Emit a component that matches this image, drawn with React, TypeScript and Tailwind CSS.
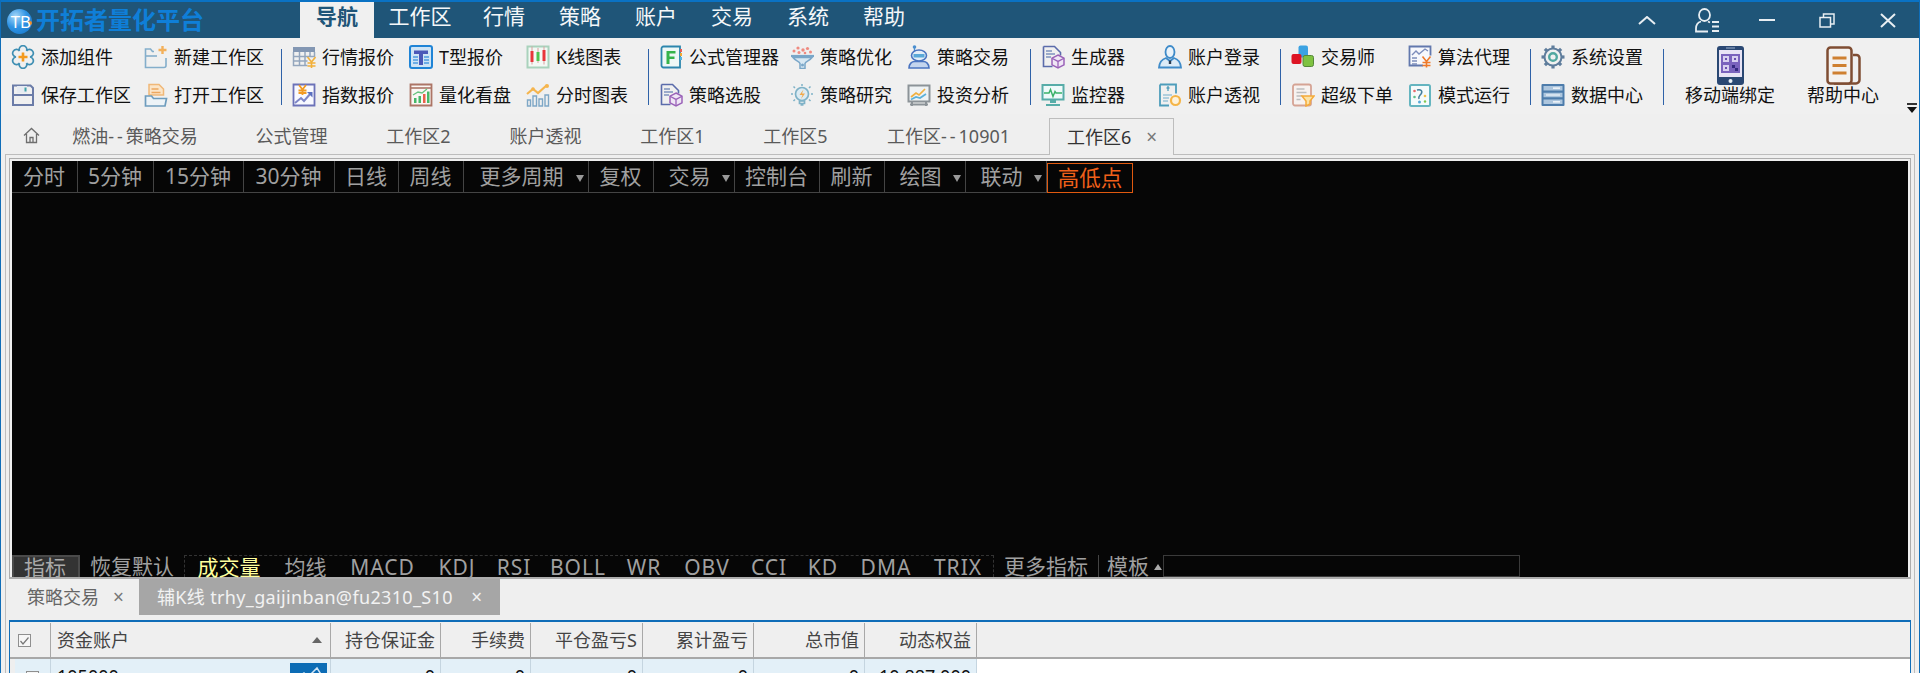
import type { ReactNode } from 'react';

const Svg = ({ children, w = 24, h = 24 }: { children: ReactNode; w?: number; h?: number }) => (
  <svg width={w} height={h} viewBox={`0 0 ${w} ${h}`} fill="none" className="shrink-0">
    {children}
  </svg>
);

const yen = (x: number, y: number, c = '#f0962a') => (
  <path d={`M${x - 4} ${y - 5}l4 5 4-5M${x} ${y}v6M${x - 4} ${y + 1}h8M${x - 4} ${y + 4}h8`} stroke={c} strokeWidth="1.6" />
);

const cubeDoc = (
  <Svg>
    <path d="M2.5 1.5h11l6 6v3M2.5 1.5v20h9" stroke="#5b6cab" strokeWidth="1.6" />
    <path d="M5 6h6M5 9h9M5 12h5" stroke="#7d93bd" strokeWidth="1.4" />
    <path d="M17 10l6 3.2v6.6L17 23l-6-3.200v-6.600z" fill="#efe6f5" stroke="#9a62b8" strokeWidth="1.5" />
    <path d="M11 13.200l6 3.200 6-3.200M17 16.400V23" stroke="#9a62b8" strokeWidth="1.300" />
  </Svg>
);

const icons: Record<string, ReactNode> = {
  add: (
    <Svg>
      <path
        d="M8.500 5.940A3.800 3.800 0 1 1 15.500 5.940A3.800 3.800 0 1 1 19 12A3.800 3.800 0 1 1 15.500 18.060A3.800 3.800 0 1 1 8.500 18.060A3.800 3.800 0 1 1 5 12A3.800 3.800 0 1 1 8.500 5.940Z"
        stroke="#3f8fb3"
        strokeWidth="1.700"
      />
      <path d="M12 7.500v9M7.500 12h9" stroke="#f39a1f" strokeWidth="2.600" />
    </Svg>
  ),
  save: (
    <Svg>
      <path d="M2 2.500h17.500l2.500 2.500v17H2z" stroke="#6b7ca8" strokeWidth="2" />
      <path d="M3 12h18" stroke="#6b7ca8" strokeWidth="2" />
      <path d="M6 3h10v7H6z" fill="#e6ebf2" />
      <path d="M14.500 4.500v4" stroke="#43a3a8" strokeWidth="2" />
    </Svg>
  ),
  newWs: (
    <Svg>
      <path d="M10 6.500H8.500L6.500 4H1.500v18.500h18.500a2 2 0 0 0 2-2V13" stroke="#84aecb" strokeWidth="1.600" />
      <path d="M2 11h11" stroke="#84aecb" strokeWidth="1.600" />
      <path d="M18.500 1v8M14.500 5h8" stroke="#f3b05a" strokeWidth="2.400" />
    </Svg>
  ),
  open: (
    <Svg>
      <path d="M5 1.500h10l4.500 4.500v6H5z" fill="#fbe5c8" stroke="#f0b878" strokeWidth="1.500" />
      <path d="M7.500 6h7M7.500 9.500h9" stroke="#eda860" strokeWidth="1.500" />
      <path d="M1.500 13h6l2 2.500h13l-1.500 7.500h-19.500z" fill="#edf3f7" stroke="#6d9cbd" strokeWidth="1.700" />
    </Svg>
  ),
  quote: (
    <Svg>
      <path d="M1 2h22v5H1z" fill="#8397b3" />
      <path d="M1.500 7v13.500h14M22.500 7v5M1.500 11.500h21M1.500 16h14M7.500 7v13M13 7v13M18 7v5" stroke="#94a6bd" strokeWidth="1.500" />
      {yen(19.5, 17, '#f2b03a')}
    </Svg>
  ),
  t: (
    <Svg>
      <rect x="1" y="1" width="22" height="22" rx="2" fill="#cfe4f5" stroke="#1f84d6" strokeWidth="2" />
      <path d="M5 5.500h14v3.500H14v11h-4V9H5z" fill="#4a58b8" />
      <path d="M4 12h5M4 15h5M4 18h5M15 12h5M15 15h5M15 18h5" stroke="#4d9ae0" strokeWidth="1.300" />
    </Svg>
  ),
  k: (
    <Svg>
      <path d="M1.500 1.500h21v21h-21z" fill="#f3f8f4" stroke="#a9d2bc" strokeWidth="2" />
      <path d="M6 1.500v18M12 3v15M18 1.500v18" stroke="#d9a0a0" strokeWidth="1" />
      <path d="M4.500 6h3v11h-3zM16.500 5h3v11h-3z" fill="#e8363a" />
      <path d="M10.500 7h3v9h-3z" fill="#4fc34f" />
    </Svg>
  ),
  index: (
    <Svg>
      <path d="M1.500 1.500h21v21h-21z" fill="#f8f9ff" stroke="#6c72b8" strokeWidth="1.800" />
      <path d="M7 2l3.500 4.500L14 2M10.500 6.500V12M6.500 7.500h8M6.500 10h8" stroke="#f29b22" strokeWidth="1.800" />
      <path d="M3 20l6-5 3 3 7-8" stroke="#7e86c6" strokeWidth="2" />
      <path d="M15 9h5.500v5.500z" fill="#5a6fc0" />
    </Svg>
  ),
  quant: (
    <Svg>
      <path d="M1.500 1.500h21v21h-21z" fill="#fbf7f4" stroke="#ac7566" strokeWidth="1.800" />
      <path d="M1.500 5h21" stroke="#ac7566" strokeWidth="1.600" />
      <path d="M5 15h2.500v5H5zM9.500 13H12v7H9.500z" fill="#46b868" />
      <path d="M14 11h2.500v9H14z" fill="#e8614a" />
      <path d="M18 8.500h2.500V20H18z" fill="#46b868" />
      <path d="M4 12l5-3 4 1 5-4" stroke="#67c47e" strokeWidth="1.300" />
    </Svg>
  ),
  time: (
    <Svg>
      <path d="M1 11l6-5 5 4 9-8" stroke="#f5b54e" strokeWidth="2.200" />
      <circle cx="7" cy="6" r="1.800" fill="#f5b54e" />
      <circle cx="21" cy="3" r="2" fill="#f5b54e" />
      <path d="M1.500 17h3v6h-3zM7 13h3.500v10H7zM13 16h3.500v7H13zM19 12h3.500v11H19z" stroke="#7ea7c6" strokeWidth="1.400" />
    </Svg>
  ),
  formula: (
    <Svg>
      <path d="M2.500 3.500a2 2 0 0 1 2-2H21v21H4.500a2 2 0 0 1-2-2z" fill="#eef8f6" stroke="#2c86ad" strokeWidth="1.800" />
      <path d="M7.500 6h9v2.500H10.500v3h5V14h-5v5h-3z" fill="#36b44a" />
      <path d="M22 4v3" stroke="#e85e56" strokeWidth="2" />
      <path d="M22 8v3" stroke="#f2a830" strokeWidth="2" />
      <path d="M22 12v3" stroke="#54b4e0" strokeWidth="2" />
    </Svg>
  ),
  optimize: (
    <Svg>
      <path d="M1 11h23" stroke="#7aa6c8" strokeWidth="2.200" />
      <path d="M3 12.500c3 4 6 3.500 7 6v5h5v-5c1-2.500 4-2 7-6z" fill="#d8e8f3" stroke="#7aa6c8" strokeWidth="1.500" />
      <circle cx="12.500" cy="20" r="1.500" fill="#7aa6c8" />
      <g fill="#ef8a80">
        <circle cx="4" cy="6" r="1.500" /><circle cx="8" cy="3" r="1.600" /><circle cx="9" cy="7.500" r="1.500" /><circle cx="13" cy="5" r="1.700" />
        <circle cx="15" cy="8" r="1.300" /><circle cx="17.500" cy="3.500" r="1.600" /><circle cx="20.500" cy="7" r="1.500" />
      </g>
    </Svg>
  ),
  robot: (
    <Svg>
      <circle cx="7.500" cy="2" r="1.800" fill="#4b8fd0" />
      <path d="M7.500 3v3" stroke="#4b8fd0" strokeWidth="1.300" />
      <ellipse cx="12" cy="10.500" rx="7.500" ry="5.500" fill="#e4eef8" stroke="#4a74c0" strokeWidth="1.600" />
      <path d="M6.500 9h11v3.500h-11z" fill="#5aa8d8" />
      <path d="M2 23c0-4.500 3-6.500 5.500-6.500h9c2.500 0 5.500 2 5.500 6.500z" fill="#c4d5ee" stroke="#4a74c0" strokeWidth="1.600" />
    </Svg>
  ),
  select: cubeDoc,
  research: (
    <Svg>
      <circle cx="12" cy="11" r="6.500" fill="#dcebf3" stroke="#7fb2c7" strokeWidth="1.700" />
      <path d="M9.500 18h5v2.500h-5zM10.500 22h3" stroke="#7fb2c7" strokeWidth="1.700" />
      <path d="M13.500 6.500L9.500 12h3l-1.500 4 4-5.500h-3z" fill="#f2a94a" />
      <path d="M12 1v2M3.500 3.500l1.500 1.500M20.500 3.500L19 5M1 11h2M21 11h2M3.500 18L5 16.500M20.500 18L19 16.500" stroke="#7fb2c7" strokeWidth="1.500" />
    </Svg>
  ),
  invest: (
    <Svg>
      <path d="M1.500 2.500h21v16h-21z" fill="#eef2f4" stroke="#8c9398" strokeWidth="2" />
      <path d="M4 14l5-4 3 2 6-6" stroke="#f0b040" strokeWidth="1.700" />
      <path d="M4 16.500l5-2.500 4 1 6-4" stroke="#5bb0d8" strokeWidth="1.700" />
      <path d="M5 19v4M19 19v4M3 21.500h18" stroke="#8c9398" strokeWidth="2" />
    </Svg>
  ),
  gen: cubeDoc,
  monitor: (
    <Svg>
      <path d="M1.500 2h21v14.500h-21z" fill="#effafa" stroke="#57aca8" strokeWidth="2" />
      <path d="M3 10h5l1.500-3.500 2.500 7 2-5 1 1.500h6" stroke="#3bb26a" strokeWidth="1.500" />
      <path d="M9 17h6v3H9zM5 21h14v2H5z" fill="#57aca8" />
    </Svg>
  ),
  login: (
    <Svg>
      <ellipse cx="12" cy="7" rx="4.500" ry="6" fill="#eaf3fa" stroke="#3f8bc9" strokeWidth="1.800" />
      <path d="M8 13c-3.500 1-6.500 4-7 9.500h22c-.5-5.500-3.500-8.500-7-9.500l-4 3z" fill="#dcebf7" stroke="#3f8bc9" strokeWidth="1.800" />
      <path d="M12 15.500v3.500" stroke="#2a3c52" strokeWidth="2.400" />
    </Svg>
  ),
  view: (
    <Svg>
      <path d="M2 1.500h16v9M2 1.500v21h9" stroke="#4e9dbb" strokeWidth="1.800" />
      <path d="M5 12h9M5 15h6M5 18h5" stroke="#9ac3d8" strokeWidth="1.300" />
      <path d="M10 3v5M8.500 5h3" stroke="#4e9dbb" strokeWidth="1.300" />
      <circle cx="17.500" cy="17.500" r="4.500" fill="#fdf2dc" stroke="#f5b548" strokeWidth="2.200" />
    </Svg>
  ),
  trader: (
    <Svg>
      <rect x="7.500" y="0.500" width="9.500" height="12" rx="2" fill="#3ba2e2" />
      <rect x="0.500" y="9" width="10" height="10" rx="2" fill="#dd1424" />
      <rect x="12" y="10.500" width="10.500" height="11" rx="2" fill="#7fc241" stroke="#55883a" strokeWidth="1" />
    </Svg>
  ),
  super: (
    <Svg>
      <rect x="2" y="1.500" width="18" height="21" rx="2" fill="#f7f2f0" stroke="#d5a394" strokeWidth="1.800" />
      <path d="M5.500 6h8M5.500 9.500h10M5.500 13h6M5.500 16.500h4" stroke="#bdbdbd" strokeWidth="1.400" />
      <path d="M11 13h12l-4 5v3l-4 2v-5z" fill="#fbe3a8" stroke="#f5ab3a" strokeWidth="1.500" />
    </Svg>
  ),
  algo: (
    <Svg>
      <path d="M15 20.500H1.500v-19h21v9" stroke="#6278ad" strokeWidth="1.800" fill="#f7f8fc" />
      <path d="M4 10l4-4 3 3 6-5 3 2" stroke="#7d8dbb" strokeWidth="1.400" />
      <path d="M4 13h5M4 16h5M4 19h5" stroke="#7d8dbb" strokeWidth="1.300" />
      {yen(18.5, 16.5, '#ef7a2a')}
    </Svg>
  ),
  mode: (
    <Svg>
      <rect x="2" y="2" width="20" height="21" rx="1.500" fill="#f5fbfb" stroke="#65b5c0" strokeWidth="2" />
      <path d="M9 7c4-1 6 1 4 4-1.500 2-3 2.500-2 5" stroke="#46809c" strokeWidth="1.500" />
      <circle cx="6.500" cy="8" r="1.300" fill="#e86a6a" /><circle cx="17" cy="13" r="1.300" fill="#f2c14a" />
      <circle cx="6.500" cy="14" r="1.300" fill="#5fc08a" /><circle cx="11.500" cy="19" r="1.500" fill="#56a8d8" />
      <circle cx="17" cy="18.500" r="1.200" fill="#7ec850" />
    </Svg>
  ),
  settings: (
    <Svg>
      <g transform="translate(12 12)" stroke="#5f7d9c" strokeWidth="3.200">
        {[0, 45, 90, 135, 180, 225, 270, 315].map(a => (
          <path key={a} d="M0-11.500v3" transform={`rotate(${a})`} />
        ))}
      </g>
      <circle cx="12" cy="12" r="8.500" stroke="#5f7d9c" strokeWidth="2" fill="#f0f0f0" />
      <circle cx="12" cy="12" r="3.800" stroke="#52a8a0" strokeWidth="2.400" />
    </Svg>
  ),
  data: (
    <Svg>
      <rect x="0.500" y="1" width="23" height="22" rx="1" fill="#4d7cab" />
      <path d="M2.500 3h19v4.500h-19zM2.500 9.800h19v4.500h-19zM2.500 16.500h19V21h-19z" fill="#adc6de" />
      <path d="M12 5.200h7M5 12h14M12 18.800h7" stroke="#fff" strokeWidth="1.200" />
    </Svg>
  ),
};

const ribbonIconPhone = (
  <Svg w={27} h={39}>
    <rect x="0" y="0" width="27" height="39" rx="3" fill="#2a4873" />
    <rect x="2" y="4" width="23" height="27" fill="#e8e4f5" />
    <path d="M9 2h9" stroke="#8aa0c0" strokeWidth="1.200" />
    <rect x="4" y="8" width="19" height="19" fill="#7a63bd" />
    <path d="M6 10h6v6H6zM15 10h6v6h-6zM6 19h6v6H6z" fill="#d8d0f0" />
    <path d="M8 12h2v2H8zM17 12h2v2h-2zM8 21h2v2H8z" fill="#6a50b0" />
    <path d="M15 19h3v3h-3zM18 22h3v3h-3z" fill="#352a80" />
    <circle cx="13.500" cy="35" r="2" fill="#e8eef5" />
  </Svg>
);

const ribbonIconHelp = (
  <Svg w={35} h={39}>
    <path d="M27 9h3.500a3 3 0 0 1 3 3v22a3.500 3.500 0 0 1-3.500 3.500H8" stroke="#7f4d33" strokeWidth="2.500" />
    <path d="M4.500 1.500h18a3 3 0 0 1 3 3V34.500a3 3 0 0 1-3 3h-18a3 3 0 0 1-3-3V4.500a3 3 0 0 1 3-3z" fill="#f4f2f0" stroke="#7f4d33" strokeWidth="2.500" />
    <path d="M6.500 12h14M6.500 19.500h14M6.500 27h14" stroke="#cf8030" strokeWidth="3" />
  </Svg>
);

type Col = { w: number; items: [string, string][] };
type Group = { cols: Col[] };

const groups: Group[] = [
  { cols: [
    { w: 133, items: [['添加组件', 'add'], ['保存工作区', 'save']] },
    { w: 137, items: [['新建工作区', 'newWs'], ['打开工作区', 'open']] },
  ] },
  { cols: [
    { w: 117, items: [['行情报价', 'quote'], ['指数报价', 'index']] },
    { w: 117, items: [['T型报价', 't'], ['量化看盘', 'quant']] },
    { w: 122, items: [['K线图表', 'k'], ['分时图表', 'time']] },
  ] },
  { cols: [
    { w: 131, items: [['公式管理器', 'formula'], ['策略选股', 'select']] },
    { w: 117, items: [['策略优化', 'optimize'], ['策略研究', 'research']] },
    { w: 123, items: [['策略交易', 'robot'], ['投资分析', 'invest']] },
  ] },
  { cols: [
    { w: 117, items: [['生成器', 'gen'], ['监控器', 'monitor']] },
    { w: 122, items: [['账户登录', 'login'], ['账户透视', 'view']] },
  ] },
  { cols: [
    { w: 117, items: [['交易师', 'trader'], ['超级下单', 'super']] },
    { w: 122, items: [['算法代理', 'algo'], ['模式运行', 'mode']] },
  ] },
  { cols: [{ w: 122, items: [['系统设置', 'settings'], ['数据中心', 'data']] }] },
];

const menus: [string, number][] = [
  ['工作区', 92],
  ['行情', 76],
  ['策略', 76],
  ['账户', 76],
  ['交易', 76],
  ['系统', 76],
  ['帮助', 76],
];

const dashes = <span className="tracking-[3px]">--</span>;

const tabs: [ReactNode, number][] = [
  [<>燃油{dashes}策略交易</>, 182],
  ['公式管理', 131],
  ['工作区2', 123],
  ['账户透视', 131],
  ['工作区1', 123],
  ['工作区5', 123],
  [<>工作区{dashes}10901</>, 183],
];

const topBar: { label: string; w: number; arrow?: boolean }[] = [
  { label: '分时', w: 66 },
  { label: '5分钟', w: 76 },
  { label: '15分钟', w: 90 },
  { label: '30分钟', w: 91 },
  { label: '日线', w: 64 },
  { label: '周线', w: 65 },
  { label: '更多周期', w: 125, arrow: true },
  { label: '复权', w: 65 },
  { label: '交易', w: 81, arrow: true },
  { label: '控制台', w: 85 },
  { label: '刷新', w: 65 },
  { label: '绘图', w: 81, arrow: true },
  { label: '联动', w: 81, arrow: true },
];

const indicators: [string, number][] = [
  ['成交量', 88],
  ['均线', 65],
  ['MACD', 89],
  ['KDJ', 60],
  ['RSI', 54],
  ['BOLL', 74],
  ['WR', 58],
  ['OBV', 68],
  ['CCI', 56],
  ['KD', 52],
  ['DMA', 74],
  ['TRIX', 70],
];

const columns: [string, number][] = [
  ['持仓保证金', 110],
  ['手续费', 90],
  ['平仓盈亏S', 112],
  ['累计盈亏', 111],
  ['总市值', 111],
  ['动态权益', 112],
];

const rowValues = ['0', '0', '0', '0', '0', '10,887,000'];

function RibbonItem({ label, icon }: { label: string; icon: string }) {
  return (
    <div className="flex h-[38px] items-center gap-[6px] whitespace-nowrap text-[18px] text-[#111]">
      {icons[icon]}
      <span>{label}</span>
    </div>
  );
}

function Ribbon() {
  return (
    <div className="flex h-[76px] shrink-0 bg-[#f0f0f0] pl-[10px]">
      {groups.map((group, i) => (
        <div key={i} className="flex">
          {i > 0 && <div className="mr-[10px] mt-[11px] h-[56px] w-px bg-[#2f62a8]" />}
          {group.cols.map(col => (
            <div key={col.items[0][0]} className="shrink-0" style={{ width: col.w }}>
              {col.items.map(([label, icon]) => (
                <RibbonItem key={label} label={label} icon={icon} />
              ))}
            </div>
          ))}
        </div>
      ))}
      <div className="mt-[11px] h-[56px] w-px bg-[#2f62a8]" />
      <div className="ml-[21px] flex w-[90px] flex-col items-center pt-[8px] text-[18px] text-[#111]">
        {ribbonIconPhone}
        <span className="h-[20px] whitespace-nowrap leading-[20px]">移动端绑定</span>
      </div>
      <div className="ml-[32px] flex w-[72px] flex-col items-center pt-[8px] text-[18px] text-[#111]">
        {ribbonIconHelp}
        <span className="h-[20px] whitespace-nowrap leading-[20px]">帮助中心</span>
      </div>
      <div className="ml-auto mb-[1px] mr-[2px] flex flex-col items-center self-end">
        <div className="h-[2px] w-[10px] bg-[#333]" />
        <div className="mt-[2px] h-0 w-0 border-x-[5px] border-t-[6px] border-x-transparent border-t-[#111]" />
      </div>
    </div>
  );
}

function TitleBar() {
  return (
    <div className="flex h-[38px] shrink-0 border-t-2 border-[#0a72c4] bg-[#1f5578]">
      <div className="flex w-[299px] shrink-0 items-center pl-[6px]">
        <svg width="25" height="25" viewBox="0 0 25 25" className="mt-[2px] shrink-0">
          <defs>
            <radialGradient id="logo" cx="35%" cy="30%" r="80%">
              <stop offset="0%" stopColor="#a8d8f8" />
              <stop offset="55%" stopColor="#2f93e4" />
              <stop offset="100%" stopColor="#1a7dd0" />
            </radialGradient>
          </defs>
          <circle cx="12.500" cy="12.500" r="12.500" fill="url(#logo)" />
          <circle cx="23" cy="14" r="2" fill="#f08a2a" />
          <text x="3.500" y="18.500" fontSize="16" fill="#fff" fontFamily="Liberation Sans, sans-serif">TB</text>
        </svg>
        <span className="ml-[4px] whitespace-nowrap text-[24px] font-bold leading-none text-[#0f7fd8]">开拓者量化平台</span>
      </div>
      <div className="flex h-full items-end">
        <div className="flex h-[36px] w-[74px] items-center justify-center bg-[#f0f0f0] pb-[7px] text-[21px] font-bold text-[#1f5578]">导航</div>
        {menus.map(([menu, w]) => (
          <div key={menu} className="flex h-[36px] items-center justify-center pb-[7px] text-[21px] text-[#f4f7f9]" style={{ width: w }}>{menu}</div>
        ))}
      </div>
      <div className="ml-auto flex items-center text-[#e8eef2]">
        <div className="flex w-[60px] justify-center">
          <svg width="18" height="9" viewBox="0 0 18 9" fill="none" stroke="currentColor" strokeWidth="2"><path d="M1 8l8-7 8 7" /></svg>
        </div>
        <div className="flex w-[60px] justify-center">
          <svg width="25" height="25" viewBox="0 0 25 25" fill="none" stroke="currentColor" strokeWidth="1.800">
            <ellipse cx="9.500" cy="7" rx="5.500" ry="6" />
            <path d="M6 13.500c-3.500 1-5 3.500-5 7v3h12M13 13.500l2 1" />
            <path d="M17 14h7M17 18.500h7M17 23h7" />
          </svg>
        </div>
        <div className="flex w-[60px] justify-center">
          <div className="h-[2px] w-[16px] bg-current" />
        </div>
        <div className="flex w-[60px] justify-center">
          <svg width="16" height="15" viewBox="0 0 16 15" fill="none" stroke="currentColor" strokeWidth="1.500"><path d="M1 4.500h10.500V14H1zM4.500 4V1H15v10h-3" /></svg>
        </div>
        <div className="flex w-[62px] justify-center">
          <svg width="16" height="15" viewBox="0 0 16 15" fill="none" stroke="currentColor" strokeWidth="2"><path d="M1 1l14 13M15 1L1 14" /></svg>
        </div>
      </div>
    </div>
  );
}

function TabRow() {
  return (
    <div className="flex h-[40px] shrink-0 items-end bg-[#efefef] pl-[22px] text-[18px] text-[#5a5a5a]">
      <svg width="17" height="17" viewBox="0 0 17 17" fill="none" stroke="#6f6f6f" strokeWidth="1.300" className="mb-[10px] mr-[4px] shrink-0">
        <path d="M1 8.500L8.500 1.500l7.500 7M3.500 7v8.500h10V7M7 15.500v-5h3v5" />
      </svg>
      {tabs.map(([label, w], i) => (
        <div key={i} className="flex h-[36px] shrink-0 items-center justify-center whitespace-nowrap pt-px" style={{ width: w }}>
          {label}
        </div>
      ))}
      <div className="relative z-10 -mb-px ml-[9px] flex h-[37px] w-[125px] shrink-0 items-center border-x border-t border-[#bdbdbd] bg-[#efefef] pl-[17px] text-[#333]">
        <span>工作区6</span>
        <span className="ml-auto mr-[16px] text-[19px] leading-none text-[#777]">×</span>
      </div>
    </div>
  );
}

function TopToolbar() {
  return (
    <div className="flex h-[32px] shrink-0 text-[21px] text-[#a0a0a0]">
      {topBar.map(item => (
        <div
          key={item.label}
          className={`relative flex shrink-0 items-center justify-center whitespace-nowrap border-b border-r border-[#444] ${item.arrow ? 'pr-[9px]' : 'pr-[1px]'}`}
          style={{ width: item.w }}
        >
          {item.label}
          {item.arrow && <span className="absolute right-[4px] top-[14px] h-0 w-0 border-x-[4px] border-t-[7px] border-x-transparent border-t-[#999]" />}
        </div>
      ))}
      <div className="mt-[2px] flex w-[86px] shrink-0 items-center justify-center whitespace-nowrap border border-[#e0590f] text-[21.500px] text-[#f0601a]">高低点</div>
    </div>
  );
}

function BottomToolbar() {
  return (
    <div className="flex h-[22px] shrink-0 text-[21px] leading-[22px] text-[#a0a0a0]">
      <div className="flex w-[68px] shrink-0 justify-center border-x-2 border-t-2 border-[#4a4a4a] bg-[#333] pr-[2px] leading-[20px] text-[#aaa]">指标</div>
      <div className="flex w-[104px] shrink-0 justify-center whitespace-nowrap">恢复默认</div>
      <div className="flex border-x border-t border-dashed border-[#333]">
        {indicators.map(([label, w], i) => (
          <div
            key={label}
            className={`flex shrink-0 justify-center whitespace-nowrap ${i === 0 ? 'text-[#ffff9c]' : i > 1 ? 'tracking-[1px]' : ''}`}
            style={{ width: w }}
          >
            {label}
          </div>
        ))}
      </div>
      <div className="flex w-[104px] shrink-0 justify-center whitespace-nowrap">更多指标</div>
      <div className="flex w-[65px] shrink-0 items-start whitespace-nowrap border-l border-[#444] pl-[8px]">
        模板
        <span className="ml-[5px] mt-[9px] h-0 w-0 border-x-[4px] border-b-[6px] border-x-transparent border-b-[#aaa]" />
      </div>
      <div className="h-[22px] w-[357px] shrink-0 border border-[#3a3a3a]" />
    </div>
  );
}

function Checkbox({ checked }: { checked?: boolean }) {
  return (
    <span className="flex h-[13px] w-[13px] shrink-0 items-center justify-center border border-[#8f8f8f] bg-[#f6f6f6]">
      {checked && (
        <svg width="9" height="8" viewBox="0 0 9 8" fill="none" stroke="#777" strokeWidth="1.200"><path d="M.5 4l2.500 3 5.500-6.500" /></svg>
      )}
    </span>
  );
}

function Table() {
  return (
    <div className="min-h-0 flex-1 border-x border-t-2 border-[#0f6db8] text-[18px]">
      <div className="flex h-[37px] border-b-2 border-[#a8a8a8] bg-[#efefef] text-[#444]">
        <div className="flex w-[40px] items-center pl-[8px] pt-[2px]">
          <Checkbox checked />
        </div>
        <div className="mt-[1px] flex w-[281px] items-center justify-between border-x border-[#a8a8a8] pl-[6px] pr-[8px]">
          <span>资金账户</span>
          <span className="h-0 w-0 border-x-[5px] border-b-[6px] border-x-transparent border-b-[#666]" />
        </div>
        {columns.map(([label, w]) => (
          <div key={label} className="mt-[1px] flex shrink-0 items-center justify-end whitespace-nowrap border-r border-[#a8a8a8] pr-[5px]" style={{ width: w }}>
            {label}
          </div>
        ))}
      </div>
      <div className="flex h-[34px] bg-white text-[#111]">
        <div className="w-[5px] bg-[#efefef]" />
        <div className="flex w-[35px] bg-[#e3f0f8] pl-[11px] pt-[12px]">
          <Checkbox />
        </div>
        <div className="flex w-[281px] justify-between border-x border-[#c5d5e0] bg-[#e3f0f8] pl-[6px] pr-[3px] leading-[34px]">
          <span>105000</span>
          <span className="mt-[4px] flex h-[30px] w-[37px] items-start justify-center bg-[#0c6cb5] pt-[3px]">
            <svg width="30" height="14" viewBox="0 0 30 14" fill="none" stroke="#cfe4f5" strokeWidth="1.500"><path d="M2 12l8-5 4 4 9-9 5 8" /></svg>
          </span>
        </div>
        {columns.map(([label, w], i) => (
          <div key={label} className="flex shrink-0 justify-end border-r border-[#c5d5e0] bg-[#e3f0f8] pr-[5px] leading-[34px]" style={{ width: w }}>
            {rowValues[i]}
          </div>
        ))}
      </div>
    </div>
  );
}

export default function App() {
  return (
    <div className="flex h-[673px] flex-col overflow-hidden border-x border-[#0f6db8] bg-[#efefef] font-['Noto_Sans','Noto_Sans_CJK_SC',sans-serif]">
      <TitleBar />
      <Ribbon />
      <TabRow />
      <div className="mx-[4px] flex min-h-0 flex-1 flex-col border-x border-t border-[#bdbdbd] px-[3px] pt-[3px]">
        <div className="h-[421px] shrink-0 border-x border-b-2 border-t border-[#adadad] px-[2px] pb-[1px] pt-[2px]">
          <div className="flex h-[416px] flex-col justify-between bg-[#060606]">
            <TopToolbar />
            <BottomToolbar />
          </div>
        </div>
        <div className="flex h-[41px] shrink-0 items-start text-[18px]">
          <div className="flex h-[36px] w-[130px] items-center pl-[18px] text-[#666]">
            <span>策略交易</span>
            <span className="ml-[14px] text-[19px] leading-none text-[#777]">×</span>
          </div>
          <div className="flex h-[36px] w-[361px] items-center whitespace-nowrap bg-[#a6a6a6] pl-[18px] text-[#f2f2f2]">
            <span className="tracking-[0.35px]">辅K线 trhy_gaijinban@fu2310_S10</span>
            <span className="ml-auto mr-[18px] text-[19px] leading-none text-[#f2f2f2]">×</span>
          </div>
        </div>
        <Table />
      </div>
    </div>
  );
}
